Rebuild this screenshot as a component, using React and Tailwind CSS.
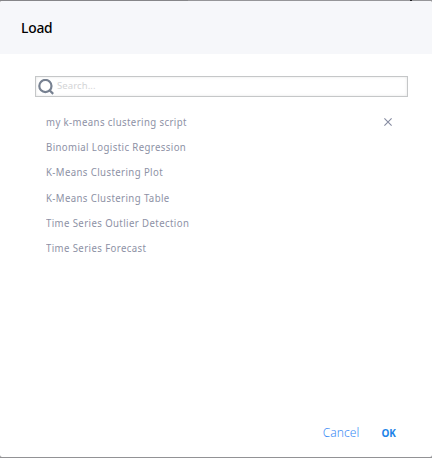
const scripts = [
  { name: 'my k-means clustering script', removable: true },
  { name: 'Binomial Logistic Regression' },
  { name: 'K-Means Clustering Plot' },
  { name: 'K-Means Clustering Table' },
  { name: 'Time Series Outlier Detection' },
  { name: 'Time Series Forecast' },
];

function SearchIcon() {
  return (
    <svg width="16" height="16" viewBox="0 0 16 16" fill="none" stroke="#778191" strokeWidth="2.2">
      <circle cx="7.4" cy="7" r="6.1" />
      <path d="M11 10.7 15.2 14.9" />
    </svg>
  );
}

function RemoveIcon() {
  return (
    <svg className="mb-px" width="8" height="8" viewBox="0 0 8 8" fill="none" stroke="#858aa0" strokeWidth="1.1">
      <path d="M0.4 0.4 7.6 7.6M7.6 0.4 0.4 7.6" />
    </svg>
  );
}

export default function App() {
  return (
    <div className="h-[458px] w-[432px] overflow-hidden bg-[#929295] font-['Noto_Sans',sans-serif]">
      <div className="flex h-px">
        <div className="w-[188px] bg-[#868689]" />
        <div className="w-[222px] bg-[#969699]" />
        <div className="w-[2px] bg-[#222226]" />
        <div className="flex-1 bg-[#969699]" />
      </div>
      <div className="flex h-[456px] flex-col overflow-hidden rounded-[2px] bg-white">
        <header className="flex h-[53px] shrink-0 items-center bg-[#f6f7fa] pl-[21px]">
          <h1 className="origin-left scale-x-[0.985] text-[14px] leading-5 font-medium tracking-[-0.2px] text-black">Load</h1>
        </header>
        <main className="flex-1 pt-[22px] pl-[35px]">
          <div className="flex h-[21px] w-[373px] items-center border border-[#c5c7c8] shadow-[inset_0_0_3px_#e4e4e4]">
            <span className="ml-[2px]"><SearchIcon /></span>
            <span className="-mt-px ml-[3px] text-[9.5px] leading-4 tracking-[0.1px] text-[#d3d4d6]">Search...</span>
          </div>
          <ul className="mt-[13px] ml-[11px] w-[346px] text-[10.2px] text-[#8d91a5]">
            {scripts.map((s, i) => (
              <li key={s.name} className={`flex items-center justify-between ${i === 3 ? 'h-[26px]' : 'h-[25px]'}`}>
                <span className="inline-block origin-left scale-x-[0.943] leading-[15px] tracking-[0.42px]">{s.name}</span>
                {s.removable && <RemoveIcon />}
              </li>
            ))}
          </ul>
        </main>
        <footer className="flex h-[48px] shrink-0 items-center justify-end pr-[36px]">
          <button className="text-[12px] leading-4 font-light tracking-[0.1px] text-[#3d8cf5]">Cancel</button>
          <button className="ml-[22px] text-[10px] leading-4 font-bold text-[#1e84e8]">OK</button>
        </footer>
      </div>
    </div>
  );
}
